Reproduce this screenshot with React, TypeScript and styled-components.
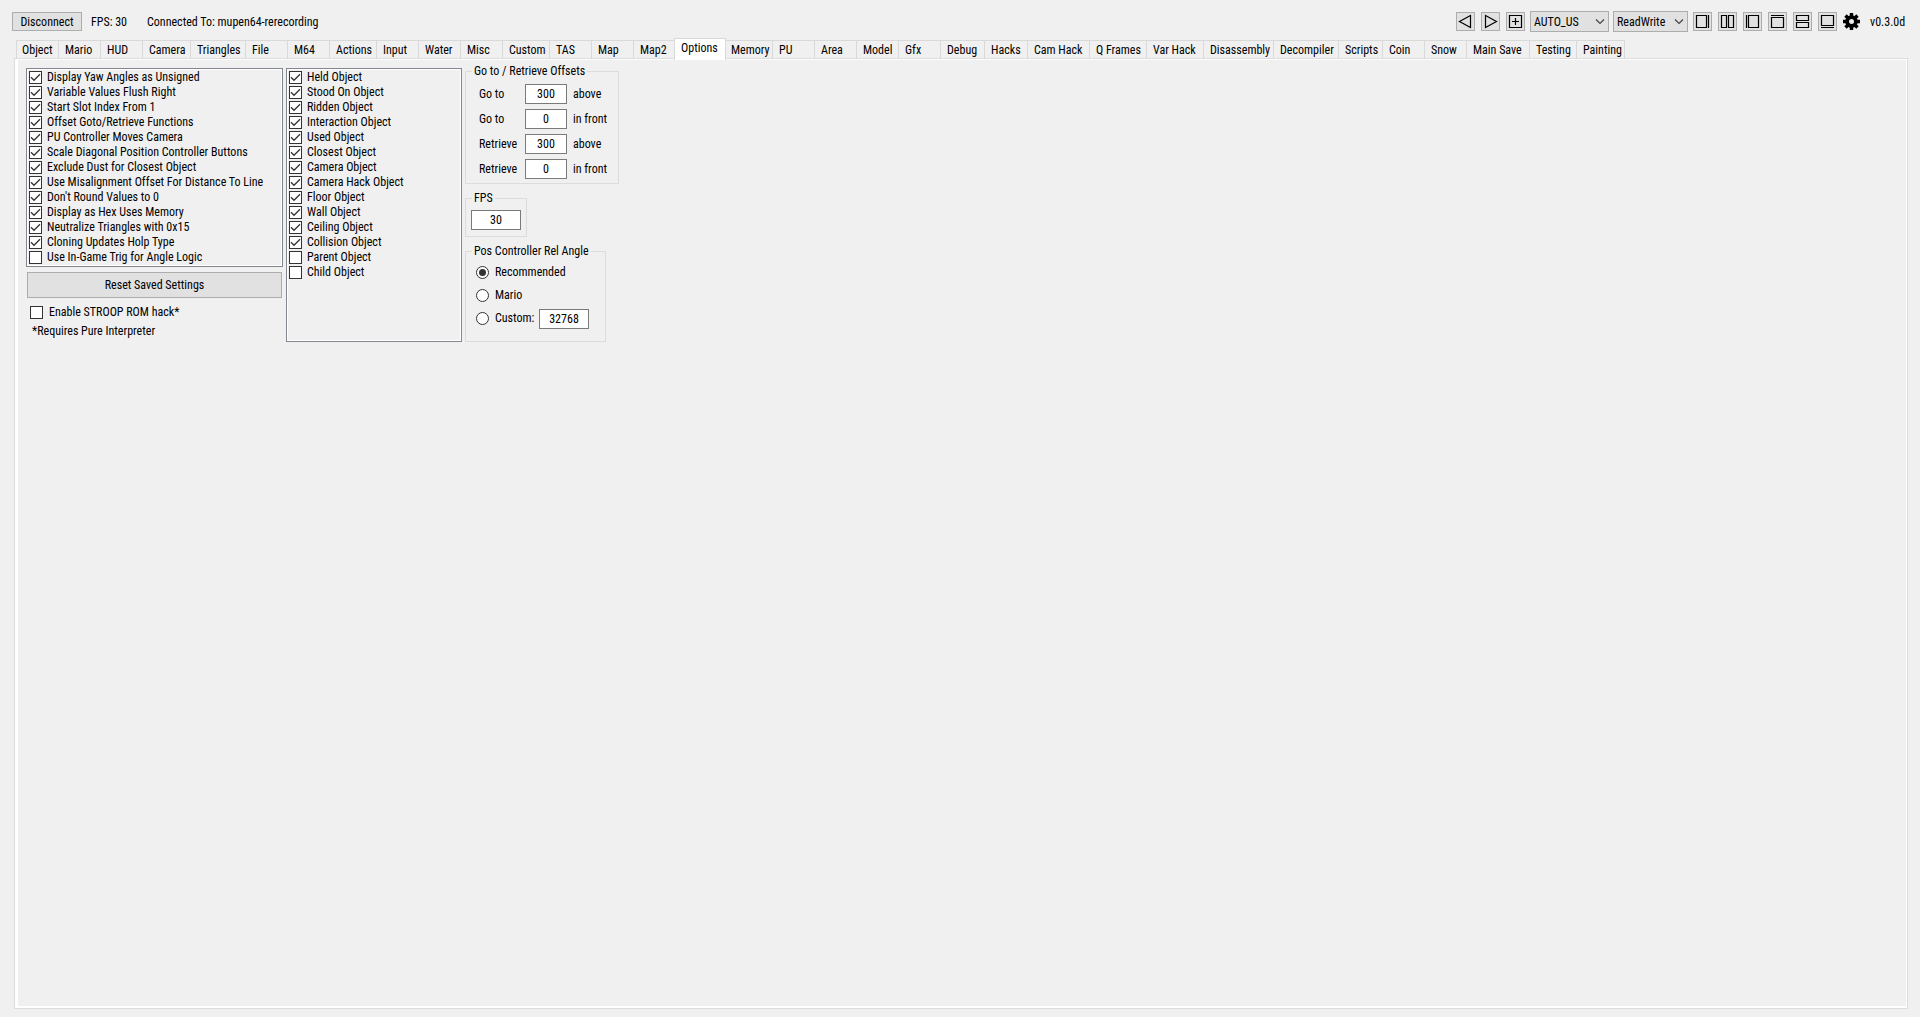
import React from 'react';
import styled, { createGlobalStyle } from 'styled-components';

const GlobalStyle = createGlobalStyle`
  *, *::before, *::after { box-sizing: border-box; }
  body {
    margin: 0;
    background: #f0f0f0;
    color: #000;
    font: 12px/15px "Roboto Condensed", "Liberation Sans", Arial, sans-serif;
  }
  button, input, select { font: inherit; color: inherit; margin: 0; }
`;

const Window = styled.div`
  display: flex;
  flex-direction: column;
  min-height: 100vh;
  padding: 0 12px 8px;
`;

const Toolbar = styled.header`
  display: flex;
  align-items: center;
  height: 21px;
  margin-top: 11px;
`;

const Button = styled.button`
  padding: 0;
  background: #e1e1e1;
  border: 1px solid #adadad;
  border-radius: 0;
`;

const DisconnectButton = styled(Button)`
  width: 70px;
  height: 19px;
  padding-top: 2px;
  line-height: 15px;
`;

const Status = styled.span<{ $gap: number }>`
  margin-left: ${(p) => p.$gap}px;
  padding-top: 2px;
  white-space: nowrap;
`;

const ToolGroup = styled.div`
  display: flex;
  align-items: center;
  gap: 6px;
  margin-left: auto;
`;

const SelectGroup = styled(ToolGroup)`
  gap: 4px;
  margin: 0 -1px;
`;

const IconButton = styled(Button)`
  width: 19px;
  height: 19px;
  svg { display: block; margin: -1px; }
`;

const GearButton = styled.button`
  width: 17px;
  height: 17px;
  padding: 0;
  border: 0;
  background: none;
  svg { display: block; }
`;

const Version = styled.span`
  width: 38px;
  margin-left: 4px;
  padding-top: 2px;
  white-space: nowrap;
`;

const SelectBox = styled.span<{ $width: number }>`
  display: grid;
  width: ${(p) => p.$width}px;
  height: 21px;
  align-items: center;
  > * { grid-area: 1 / 1; }
  select {
    appearance: none;
    width: 100%;
    height: 21px;
    padding: 2px 16px 0 3px;
    background: #e1e1e1;
    border: 1px solid #adadad;
    border-radius: 0;
  }
  svg { justify-self: end; margin-right: 4px; pointer-events: none; }
`;

const TabBar = styled.nav`
  display: flex;
  align-items: flex-end;
  height: 20px;
  margin: 6px 0 0 4px;
`;

const Tab = styled.button<{ $width: number; $active: boolean }>`
  flex: none;
  width: ${(p) => p.$width + (p.$active ? 4 : 0)}px;
  height: ${(p) => (p.$active ? 22 : 18)}px;
  margin: ${(p) => (p.$active ? '0 -2px -2px' : '0')};
  padding: ${(p) => (p.$active ? '0 0 3px 6px' : '1px 0 0 6px')};
  position: ${(p) => (p.$active ? 'relative' : 'static')};
  background: ${(p) => (p.$active ? '#fff' : '#f0f0f0')};
  border: 1px solid #d9d9d9;
  border-width: 1px 0 0 1px;
  text-align: left;
  white-space: nowrap;
  ${(p) => p.$active && 'border-right-width: 1px;'}
  &:first-child { padding-left: 5px; }
  &:last-child { border-right-width: 1px; }
`;

const Panel = styled.main`
  display: flex;
  flex: 1;
  align-items: flex-start;
  gap: 3px;
  margin-left: 2px;
  padding: 9px 11px;
  border: 1px solid #dcdcdc;
  box-shadow: inset 3px 0 #fff, inset 0 1px #fff, inset -1px 0 #fff, inset 0 -2px #fff;
`;

const Column = styled.div<{ $width: number }>`
  display: flex;
  flex-direction: column;
  width: ${(p) => p.$width}px;
`;

const CheckList = styled.ul<{ $height?: number }>`
  height: ${(p) => (p.$height ? `${p.$height}px` : 'auto')};
  margin: 0;
  padding: 1px 2px;
  list-style: none;
  border: 1px solid #828790;
  box-shadow: inset 0 0 0 1px #fff;
`;

const CheckLabel = styled.label<{ $gap: number }>`
  display: flex;
  align-items: center;
  gap: ${(p) => p.$gap}px;
  height: 15px;
  white-space: nowrap;
`;

const Mark = styled.span<{ $round?: boolean }>`
  display: grid;
  flex: none;
  width: 13px;
  height: 13px;
  > * { grid-area: 1 / 1; }
  input {
    appearance: none;
    width: 13px;
    height: 13px;
    background: #fff;
    border: 1px solid #333;
    border-radius: ${(p) => (p.$round ? '50%' : '0')};
  }
  svg { visibility: hidden; pointer-events: none; }
  input:checked + svg { visibility: visible; }
`;

const ResetButton = styled(Button)`
  height: 26px;
  margin: 5px 1px 7px;
  padding-top: 1px;
`;

const RomHack = styled.div`
  padding-left: 4px;
`;

const Note = styled.p`
  margin: 4px 0 0 6px;
`;

const Groups = styled.div`
  display: flex;
  flex-direction: column;
  align-items: flex-start;
  margin-top: -5px;
  gap: 6px;
`;

const Group = styled.fieldset<{ $width: number; $height: number }>`
  width: ${(p) => p.$width}px;
  height: ${(p) => p.$height}px;
  margin: 0;
  padding: 0;
  border: 1px solid #dcdcdc;
  legend { margin-left: 6px; padding: 1px 2px 0; }
`;

const GroupBody = styled.div<{ $pad: string }>`
  padding: ${(p) => p.$pad};
`;

const OffsetRow = styled.label`
  display: grid;
  grid-template-columns: 46px 42px auto;
  align-items: center;
  height: 20px;
  margin-bottom: 5px;
  white-space: nowrap;
`;

const After = styled.span`
  margin-left: 6px;
`;

const Field = styled.input<{ $width: number }>`
  width: ${(p) => p.$width}px;
  height: 20px;
  padding: 0;
  background: #fff;
  border: 1px solid #7a7a7a;
  border-radius: 0;
  text-align: center;
`;

const RadioRow = styled.div`
  display: flex;
  align-items: center;
  height: 23px;
`;

const RadioLabel = styled(CheckLabel)`
  min-width: 63px;
`;

const tabs: [string, number][] = [
  ['Object', 42], ['Mario', 42], ['HUD', 42], ['Camera', 48], ['Triangles', 55], ['File', 42],
  ['M64', 42], ['Actions', 47], ['Input', 42], ['Water', 42], ['Misc', 42], ['Custom', 47],
  ['TAS', 42], ['Map', 42], ['Map2', 43], ['Options', 48], ['Memory', 48], ['PU', 42],
  ['Area', 42], ['Model', 42], ['Gfx', 42], ['Debug', 44], ['Hacks', 43], ['Cam Hack', 62],
  ['Q Frames', 57], ['Var Hack', 57], ['Disassembly', 70], ['Decompiler', 65], ['Scripts', 44],
  ['Coin', 42], ['Snow', 42], ['Main Save', 63], ['Testing', 47], ['Painting', 49],
];

const settings: [string, boolean][] = [
  ['Display Yaw Angles as Unsigned', true],
  ['Variable Values Flush Right', true],
  ['Start Slot Index From 1', true],
  ['Offset Goto/Retrieve Functions', true],
  ['PU Controller Moves Camera', true],
  ['Scale Diagonal Position Controller Buttons', true],
  ['Exclude Dust for Closest Object', true],
  ['Use Misalignment Offset For Distance To Line', true],
  ["Don't Round Values to 0", true],
  ['Display as Hex Uses Memory', true],
  ['Neutralize Triangles with 0x15', true],
  ['Cloning Updates Holp Type', true],
  ['Use In-Game Trig for Angle Logic', false],
];

const overlays: [string, boolean][] = [
  ['Held Object', true], ['Stood On Object', true], ['Ridden Object', true],
  ['Interaction Object', true], ['Used Object', true], ['Closest Object', true],
  ['Camera Object', true], ['Camera Hack Object', true], ['Floor Object', true],
  ['Wall Object', true], ['Ceiling Object', true], ['Collision Object', true],
  ['Parent Object', false], ['Child Object', false],
];

const offsets = [
  ['Go to', '300', 'above'],
  ['Go to', '0', 'in front'],
  ['Retrieve', '300', 'above'],
  ['Retrieve', '0', 'in front'],
];

const moveIcons: [string, string][] = [
  ['Move tab left', 'M14.5 3.5 L3.5 9.5 L14.5 15.5 Z'],
  ['Move tab right', 'M4.5 3.5 L15.5 9.5 L4.5 15.5 Z'],
  ['Add tab', 'M3.5 3.5 H15.5 V15.5 H3.5 Z M9.5 6 V13 M6 9.5 H13'],
];

const splitIcons: [string, string][] = [
  ['Show left panel', 'M3.5 3.5 H13.5 V15.5 H3.5 Z M15.5 3 V16'],
  ['Split columns', 'M3.5 3.5 H8.5 V15.5 H3.5 Z M10.5 3.5 H15.5 V15.5 H10.5 Z'],
  ['Show right panel', 'M5.5 3.5 H15.5 V15.5 H5.5 Z M3.5 3 V16'],
  ['Show bottom panel', 'M3.5 5.5 H15.5 V15.5 H3.5 Z M3 3.5 H16'],
  ['Split rows', 'M3.5 3.5 H15.5 V8.5 H3.5 Z M3.5 10.5 H15.5 V15.5 H3.5 Z'],
  ['Show top panel', 'M3.5 3.5 H15.5 V13.5 H3.5 Z M3 15.5 H16'],
];

function ToolIcon({ label, path }: { label: string; path: string }) {
  return (
    <IconButton type="button" aria-label={label}>
      <svg width="19" height="19" viewBox="0 0 19 19" fill="none" stroke="#000" strokeWidth="1.2">
        <path d={path} />
      </svg>
    </IconButton>
  );
}

function Dropdown({ label, value, width }: { label: string; value: string; width: number }) {
  return (
    <SelectBox $width={width}>
      <select aria-label={label} defaultValue={value}>
        <option>{value}</option>
      </select>
      <svg width="10" height="6" viewBox="0 0 10 6" fill="none" stroke="#444" strokeWidth="1.2">
        <path d="M1 0.5 L5 4.5 L9 0.5" />
      </svg>
    </SelectBox>
  );
}

function Check({ label, checked, gap = 5 }: { label: string; checked: boolean; gap?: number }) {
  return (
    <CheckLabel $gap={gap}>
      <Mark>
        <input type="checkbox" defaultChecked={checked} />
        <svg width="13" height="13" viewBox="0 0 13 13" fill="none" stroke="#333" strokeWidth="1.3">
          <path d="M2 6.3 L5 9.3 L11 3.3" />
        </svg>
      </Mark>
      {label}
    </CheckLabel>
  );
}

function Radio({ label, checked = false }: { label: string; checked?: boolean }) {
  return (
    <RadioLabel $gap={6}>
      <Mark $round>
        <input type="radio" name="relative-angle" defaultChecked={checked} />
        <svg width="13" height="13" viewBox="0 0 13 13">
          <circle cx="6.5" cy="6.5" r="3.5" fill="#333" />
        </svg>
      </Mark>
      {label}
    </RadioLabel>
  );
}

export default function App() {
  const [active, setActive] = React.useState('Options');
  return (
    <Window>
      <GlobalStyle />
      <Toolbar>
        <DisconnectButton type="button">Disconnect</DisconnectButton>
        <Status $gap={9}>FPS: 30</Status>
        <Status $gap={20}>Connected To: mupen64-rerecording</Status>
        <ToolGroup>
          {moveIcons.map(([label, path]) => <ToolIcon key={label} label={label} path={path} />)}
          <SelectGroup>
            <Dropdown label="ROM version" value="AUTO_US" width={79} />
            <Dropdown label="Access mode" value="ReadWrite" width={75} />
          </SelectGroup>
          {splitIcons.map(([label, path]) => <ToolIcon key={label} label={label} path={path} />)}
          <GearButton type="button" aria-label="Settings">
            <svg width="17" height="17" viewBox="0 0 17 17">
              <circle cx="8.5" cy="8.5" r="4.4" fill="none" stroke="#000" strokeWidth="3.8" />
              <path
                d="M8.5 0 V4 M8.5 13 V17 M0 8.5 H4 M13 8.5 H17 M2.5 2.5 L5 5 M12 12 L14.5 14.5 M14.5 2.5 L12 5 M5 12 L2.5 14.5"
                stroke="#000"
                strokeWidth="3.4"
              />
            </svg>
          </GearButton>
          <Version>v0.3.0d</Version>
        </ToolGroup>
      </Toolbar>

      <TabBar>
        {tabs.map(([name, width]) => (
          <Tab
            key={name}
            type="button"
            $width={width}
            $active={name === active}
            onClick={() => setActive(name)}
          >
            {name}
          </Tab>
        ))}
      </TabBar>

      <Panel>
        <Column $width={257}>
          <CheckList>
            {settings.map(([label, checked]) => (
              <li key={label}><Check label={label} checked={checked} /></li>
            ))}
          </CheckList>
          <ResetButton type="button">Reset Saved Settings</ResetButton>
          <RomHack>
            <Check label="Enable STROOP ROM hack*" checked={false} gap={6} />
          </RomHack>
          <Note>*Requires Pure Interpreter</Note>
        </Column>

        <Column $width={176}>
          <CheckList $height={274}>
            {overlays.map(([label, checked]) => (
              <li key={label}><Check label={label} checked={checked} /></li>
            ))}
          </CheckList>
        </Column>

        <Groups>
          <Group $width={154} $height={121}>
            <legend>Go to / Retrieve Offsets</legend>
            <GroupBody $pad="5px 0 0 13px">
              {offsets.map(([action, value, direction], i) => (
                <OffsetRow key={i}>
                  {action}
                  <Field $width={42} type="text" defaultValue={value} />
                  <After>{direction}</After>
                </OffsetRow>
              ))}
            </GroupBody>
          </Group>
          <Group $width={62} $height={47}>
            <legend>FPS</legend>
            <GroupBody $pad="4px 5px 0">
              <Field $width={50} type="text" aria-label="FPS" defaultValue="30" />
            </GroupBody>
          </Group>
          <Group $width={141} $height={99}>
            <legend>Pos Controller Rel Angle</legend>
            <GroupBody $pad="2px 0 0 10px">
              <RadioRow><Radio label="Recommended" checked /></RadioRow>
              <RadioRow><Radio label="Mario" /></RadioRow>
              <RadioRow>
                <Radio label="Custom:" />
                <Field $width={50} type="text" aria-label="Custom angle" defaultValue="32768" />
              </RadioRow>
            </GroupBody>
          </Group>
        </Groups>
      </Panel>
    </Window>
  );
}
